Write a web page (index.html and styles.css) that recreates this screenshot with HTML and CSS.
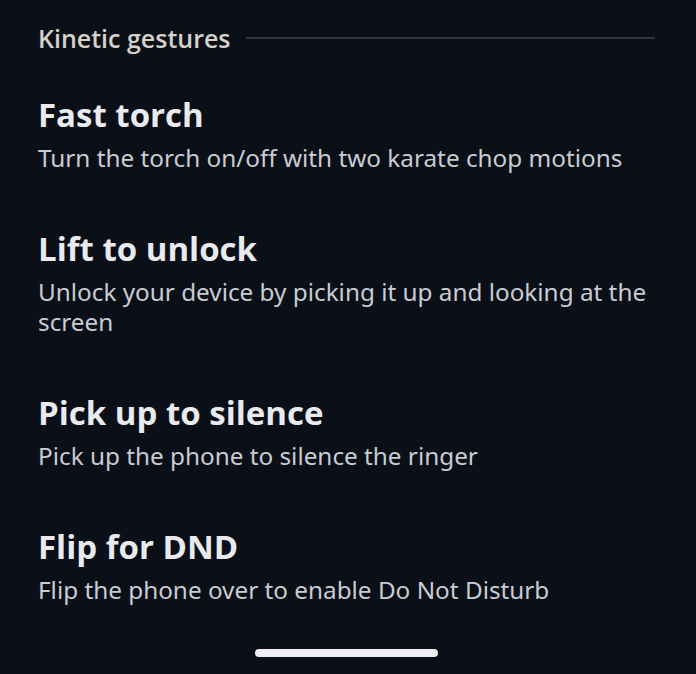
FILE: index.html
```html
<!DOCTYPE html>
<html lang="en">
<head>
    <meta charset="UTF-8">
    <meta name="viewport" content="width=device-width, initial-scale=1.0">
    <title>Kinetic gestures</title>
    <link rel="stylesheet" href="styles.css">
</head>
<body>
    <div class="screen">
        <div class="section-header">
            <span class="section-title">Kinetic gestures</span>
            <span class="section-line"></span>
        </div>

        <div class="gesture-list">
            <div class="gesture-item">
                <h2>Fast torch</h2>
                <p>Turn the torch on/off with two karate chop motions</p>
            </div>

            <div class="gesture-item">
                <h2>Lift to unlock</h2>
                <p>Unlock your device by picking it up and looking at the screen</p>
            </div>

            <div class="gesture-item">
                <h2>Pick up to silence</h2>
                <p>Pick up the phone to silence the ringer</p>
            </div>

            <div class="gesture-item">
                <h2>Flip for DND</h2>
                <p>Flip the phone over to enable Do Not Disturb</p>
            </div>
        </div>

        <div class="home-bar"></div>
    </div>
</body>
</html>
```

FILE: styles.css
```css
* {
    margin: 0;
    padding: 0;
    box-sizing: border-box;
}

body {
    background-color: #0a0f18;
    font-family: "Open Sans", Arial, sans-serif;
    color: #e6e8ec;
}

.screen {
    height: 674px;
    padding: 23px 41px 0 38px;
    display: flex;
    flex-direction: column;
}

.section-header {
    display: flex;
    align-items: center;
    gap: 15px;
    height: 30px;
}

.section-title {
    font-size: 25px;
    font-weight: 600;
    line-height: 30px;
    color: #d6d1c9;
    white-space: nowrap;
}

.section-line {
    flex: 1;
    height: 2px;
    background: #33363d;
}

.gesture-list {
    margin-top: 42px;
    display: flex;
    flex-direction: column;
    gap: 56px;
}

.gesture-item h2 {
    font-size: 33px;
    font-weight: 700;
    line-height: 40px;
    color: #e8eaed;
}

.gesture-item p {
    font-family: "Noto Sans", Arial, sans-serif;
    font-size: 24.3px;
    line-height: 30px;
    color: #c9ccd1;
    margin-top: 8px;
}

.home-bar {
    flex-shrink: 0;
    width: 183px;
    height: 8px;
    border-radius: 4px;
    background: #eceef0;
    margin: auto auto 17px;
}
```
